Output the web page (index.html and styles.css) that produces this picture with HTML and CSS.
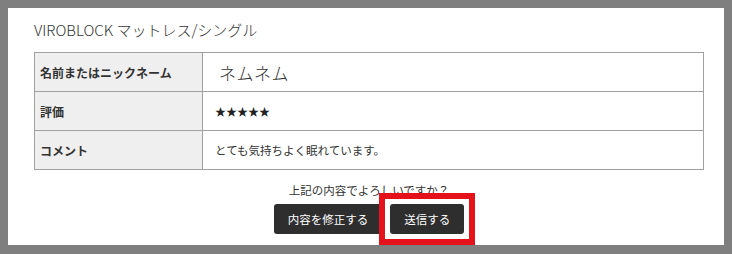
FILE: index.html
```html
<!DOCTYPE html>
<html lang="ja">
<head>
<meta charset="utf-8">
<title>確認</title>
<link rel="stylesheet" href="styles.css">
</head>
<body>
<div class="panel">
  <h1 class="title">VIROBLOCK マットレス/シングル</h1>
  <table class="confirm">
    <tr>
      <th>名前またはニックネーム</th>
      <td><span class="name">ネムネム</span></td>
    </tr>
    <tr>
      <th>評価</th>
      <td><span class="stars">★★★★★</span></td>
    </tr>
    <tr>
      <th>コメント</th>
      <td>とても気持ちよく眠れています。</td>
    </tr>
  </table>
  <div class="footer">
    <p class="question">上記の内容でよろしいですか？</p>
    <div class="buttons">
      <button class="btn" type="button">内容を修正する</button>
      <button class="btn btn-send" type="button">送信する</button>
    </div>
  </div>
</div>
</body>
</html>
```

FILE: styles.css
```css
html, body {
  margin: 0;
  padding: 0;
}
body {
  background: #7f7f7f;
  padding: 8px 8px 9px 8px;
  font-family: "Noto Sans CJK JP", "Noto Sans", sans-serif;
  color: #333;
}
.panel {
  background: #fff;
  height: 237px;
  box-sizing: border-box;
  padding: 10px 20px 11px 26px;
}
.title {
  margin: 0;
  font-size: 15px;
  font-weight: 300;
  line-height: 24px;
  color: #333;
}
.confirm {
  margin-top: 10px;
  width: 100%;
  border-collapse: collapse;
  font-size: 11.5px;
}
.confirm th,
.confirm td {
  border: 1px solid #a0a0a0;
  height: 38px;
  padding: 0;
  vertical-align: middle;
  text-align: left;
}
.confirm th {
  width: 162px;
  background: #efefef;
  font-weight: bold;
  font-size: 12px;
  padding-left: 5px;
  color: #333;
}
.confirm td {
  padding-left: 12px;
  color: #333;
}
.name {
  display: inline-block;
  padding-left: 4px;
  font-size: 17px;
  font-weight: 300;
  letter-spacing: 0.5px;
  color: #333;
}
.stars {
  color: #222;
  font-size: 11px;
}
.footer {
  display: flex;
  flex-direction: column;
  align-items: center;
}
.question {
  margin: 11px 0 0 0;
  font-size: 11.5px;
  line-height: 18px;
  color: #333;
}
.buttons {
  margin-top: 5px;
  display: flex;
  gap: 8px;
}
.btn {
  height: 30px;
  padding: 0 14px;
  border: none;
  border-radius: 3px;
  background: #2e2e2e;
  color: #fff;
  font-family: "Noto Sans CJK JP", "Noto Sans", sans-serif;
  font-size: 11.5px;
  line-height: 30px;
  cursor: pointer;
}
.btn-send {
  position: relative;
}
.btn-send::after {
  content: "";
  position: absolute;
  left: -11px;
  right: -11px;
  top: -11px;
  bottom: -11px;
  border: 6px solid #e5121c;
  pointer-events: none;
}
```
